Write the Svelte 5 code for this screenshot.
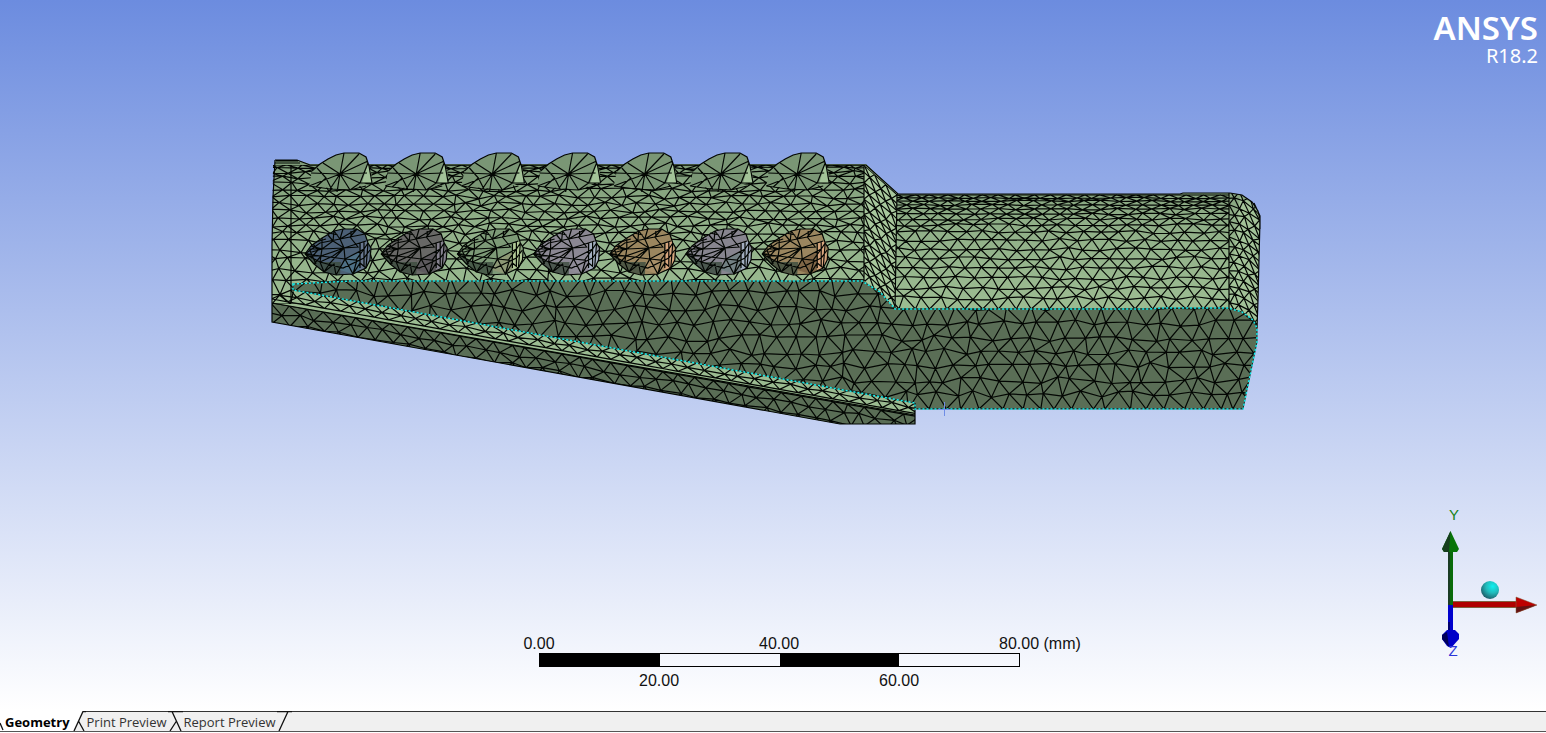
<script>
  const noise = (a, b, seed) => {
    const s = Math.sin(a * 127.1 + b * 311.7 + seed * 74.7) * 43758.5453;
    return s - Math.floor(s) - 0.5;
  };

  // Staggered triangle mesh between x0 and x1 with one row of nodes per entry of ys.
  function mesh({ x0, x1, ys, dx, jx = 0, jy = 0, seed = 1, warp = (x, y) => [x, y] }) {
    const cols = Math.ceil((x1 - x0) / dx) + 2;
    const node = (r, c) => {
      const gap = r + 1 < ys.length ? ys[r + 1] - ys[r] : ys[r] - ys[r - 1];
      const edge = r === 0 || r === ys.length - 1;
      const x = x0 + (c - 1 + (r % 2 ? 0.5 : 0)) * dx + noise(r, c, seed) * jx;
      const y = ys[r] + (edge ? 0 : noise(c, r, seed + 9) * jy * gap);
      return warp(x, y);
    };
    const f = (p) => `${Math.round(p[0] * 10) / 10} ${Math.round(p[1] * 10) / 10}`;
    let d = '';
    for (let r = 0; r < ys.length; r++) {
      for (let c = 0; c <= cols; c++) {
        const p = node(r, c);
        d += `M${f(p)}L${f(node(r, c + 1))}`;
        if (r + 1 === ys.length) continue;
        const a = node(r + 1, r % 2 ? c : c - 1);
        const b = node(r + 1, r % 2 ? c + 1 : c);
        d += `M${f(a)}L${f(p)}L${f(b)}`;
      }
    }
    return d;
  }

  const upperMesh = mesh({
    x0: 272, x1: 866, dx: 17, jx: 8, jy: 0.6, seed: 3,
    ys: [165, 168, 172, 177, 183, 190, 197, 204, 211, 218, 225, 233, 241, 250, 260, 270, 281, 292, 304]
  });
  const handleMesh = mesh({
    x0: 897, x1: 1230, dx: 17, jx: 4, jy: 0.4, seed: 5,
    ys: [195, 198, 201, 205, 209, 214, 219, 225, 232, 240, 249, 258, 268, 278, 288, 298, 309]
  });
  const slopeMesh = mesh({
    x0: 864, x1: 897, dx: 11, jx: 1, jy: 0.3, seed: 2,
    ys: Array.from({ length: 15 }, (_, i) => 165 + i * 8.3),
    warp: (x, y) => [x, y + (x - 864) * 0.9]
  });
  const endMesh = mesh({
    x0: 1229, x1: 1262, dx: 10, jx: 2, jy: 0.4, seed: 8,
    ys: Array.from({ length: 18 }, (_, i) => 190 + i * 8),
    warp: (x, y) => [x, y + Math.pow(Math.max(0, x - 1229) / 31, 2) * 16]
  });
  const frontMesh = mesh({
    x0: 290, x1: 1262, dx: 18, jx: 9, jy: 0.5, seed: 11,
    ys: [278, 293, 308, 323, 338, 352, 366, 380, 394, 409]
  });
  const ribMesh = mesh({
    x0: 272, x1: 918, dx: 17, jx: 5, jy: 0.4, seed: 6,
    ys: [286, 293, 299],
    warp: (x, y) => [x, y + (x - 272) * 0.178]
  });
  const baseMesh = mesh({
    x0: 272, x1: 918, dx: 17, jx: 6, jy: 0.4, seed: 7,
    ys: [303, 312, 322, 332],
    warp: (x, y) => [x, y + (x - 272) * 0.176]
  });

  const pitch = 76.2;
  const pods = [
    { main: '#4c6076', right: '#4f7187', edge: '#68778f' },
    { main: '#686866', right: '#5d5a5e', edge: '#85818e' },
    { main: '#7d9a77', right: '#8d9875', edge: '#b1c897' },
    { main: '#8b8893', right: '#8f8c98', edge: '#a6b1c3' },
    { main: '#9b865f', right: '#a88f68', edge: '#d7a57d' },
    { main: '#87858f', right: '#738184', edge: '#a2aec0' },
    { main: '#9b865f', right: '#806747', edge: '#d7a57d' }
  ];

  const body = 'M275 160H297L310 164H866L898 194H1180L1183 193H1230L1242 195L1252 202L1258 211L1260 219L1258 300L1257 342L1243 409H915V424H840L272 322V245L273 197L275 165Z';
  const front = 'M293 284L350 281H862L880 292L895 309H1150L1160 308H1228L1242 312L1253 320L1257 328V342L1243 409H915V403L293 290Z';
  const podShape = 'M305 254L311 246L322 238L334 231L343 229H357L365 234L368 243L371 248L370 260L366 268L353 274L336 275L324 272L314 264Z';

  const tabs = ['Geometry', 'Print Preview', 'Report Preview'];
  let active = $state('Geometry');
</script>

<div class="app">
  <main class="viewport">
    <svg class="model" viewBox="0 0 1546 711" role="img" aria-label="Meshed part">
      <defs>
        <linearGradient id="skin" x1="0" y1="165" x2="0" y2="300" gradientUnits="userSpaceOnUse">
          <stop offset="0" stop-color="#7f9c79" />
          <stop offset="0.4" stop-color="#8fae87" />
          <stop offset="1" stop-color="#9bbb91" />
        </linearGradient>
        <clipPath id="c-upper"><path d="M273 165H864V281H350L293 284V291L305 304H272V245Z" /></clipPath>
        <clipPath id="c-handle"><path d="M897 194H1229V309H895Z" /></clipPath>
        <clipPath id="c-slope"><path d="M864 165L897 194L895 309L880 292L864 281Z" /></clipPath>
        <clipPath id="c-end"><path d="M1229 193L1242 195L1252 202L1260 217L1257 328L1242 312L1229 308Z" /></clipPath>
        <clipPath id="c-front"><path d={front} /></clipPath>
        <clipPath id="c-rib"><path d="M293 290L915 403V415L272 303V297Z" /></clipPath>
        <clipPath id="c-base"><path d="M272 303L915 415V424H840L272 322Z" /></clipPath>

        <g id="bump">
          <path class="bump-face" d="M309 186L312 171L320 164L328 159L336 155L344 153H359L366 157L369 166L366 183L352 190Z" />
          <path class="bump-side" d="M368 163L371 172L372 183L362 183Z" />
          <path class="wire" d="M312 171L320 164L328 159L336 155L344 153H359L366 157L369 166L372 183L360 183L368 163M340 174L344 153M340 174L359 154M340 174L368 161M340 174L323 163M340 174L311 173M340 174L309 186M340 174L330 189M340 174L337 192M340 174L350 190M340 174L360 183M340 174L367 173M317 168L326 178L316 187M326 178L332 190M350 190L360 183M309 186L330 189L350 190L366 186" />
        </g>
        <g id="pod-wire">
          <path class="wire" d={podShape} />
          <path class="wire" d="M305 254L322 249L344 248L366 241M305 254L320 243L340 239L357 229M305 254L321 256L345 259L364 249L368 243M305 254L320 262L343 268L364 258L370 250M311 246L322 249L320 262L324 272M322 238L322 249L333 241L334 231M334 231L340 239L343 229M344 248L340 239L350 237L365 234M350 237L357 229M350 237L358 247L344 248L333 241M344 248L345 259L336 275M344 248L333 256L320 262M344 248L321 256L314 264M344 248L330 263L324 272M345 259L353 274L360 263L366 268M345 259L356 260L364 249M360 243V268M364 242V267M368 243L366 268M353 274L357 260M313 244L318 250L311 258M316 242L326 239M310 251L316 264M308 256H324M309 249H322M328 235L333 241M336 275L334 264L324 272M351 231V237M329 233L338 235" />
        </g>
      </defs>

      <g>
        <path d={body} fill="url(#skin)" />
        <path class="slope" d="M864 165L897 194L895 309L880 292L864 281Z" />
        <path class="end" d="M1240 197L1252 203L1260 217L1257 328L1242 312L1229 308Z" />
        <path class="shade" d="M272 303L915 415V424H840L272 322Z" />
        <path class="shade" d={front} />

        <path class="wire" d={upperMesh} clip-path="url(#c-upper)" />
        <path class="wire" d={handleMesh} clip-path="url(#c-handle)" />
        <path class="wire" d={slopeMesh} clip-path="url(#c-slope)" />
        <path class="wire" d={endMesh} clip-path="url(#c-end)" />
        <path class="wire" d={frontMesh} clip-path="url(#c-front)" />
        <path class="wire" d={ribMesh} clip-path="url(#c-rib)" />
        <path class="wire" d={baseMesh} clip-path="url(#c-base)" />

        <path class="wire" d="M864 165V281M897 194L895 309M1229 193V308M291 165V303M272 303L915 415M275 160H297L310 165H866L898 194H1180L1183 193H1230L1242 195L1252 202L1258 211L1260 219L1258 300L1257 328M915 403V424H840L272 322V245L273 197L275 160M275 163H300M276 161H298M1254 203L1260 216V229" />

        {#each pods as pod, i}
          <use href="#bump" x={i * pitch} />
          <g transform={`translate(${i * pitch} 0)`}>
            <path d={podShape} fill={pod.main} />
            <path class="pod-low" d="M305 254L320 262H341L340 275L324 272L314 264Z" />
            <path d="M345 259L360 252V270L353 274L340 270Z" fill={pod.right} />
            <path d="M361 243L368 241L370 260L366 268L360 270Z" fill={pod.edge} />
          </g>
          <use href="#pod-wire" x={i * pitch} />
        {/each}

        <path class="edge-back" d={front} />
        <path class="edge" d={front} />
        <path class="probe" d="M938 409.500H951M944.500 402V416" />
      </g>
    </svg>

    <div class="brand">
      <strong>ANSYS</strong>
      <span>R18.2</span>
    </div>

    <div class="scale">
      <div class="labels"><span>0.00</span><span>40.00</span><span class="unit">80.00 (mm)</span></div>
      <div class="bar"><i></i><i></i><i></i><i></i></div>
      <div class="labels lower"><span>20.00</span><span>60.00</span></div>
    </div>

    <svg class="triad" viewBox="0 0 116 165" role="img" aria-label="Axis triad">
      <defs>
        <radialGradient id="ball" cx="0.65" cy="0.3" r="0.8">
          <stop offset="0" stop-color="#0ff0f0" />
          <stop offset="0.45" stop-color="#22bcbc" />
          <stop offset="1" stop-color="#1d4f5c" />
        </radialGradient>
      </defs>
      <text x="24" y="20" fill="#168216">Y</text>
      <path d="M18 46H23V105H18Z" fill="#0a6b0a" />
      <path d="M18 46H20V105H18Z" fill="#1a3c24" />
      <path d="M20.500 31L12 49L14 52H27L29 49Z" fill="#087508" />
      <path d="M20.500 31L12 49L14 52H19Z" fill="#153d1d" />
      <path d="M23 102H87V107H23Z" fill="#b00000" />
      <path d="M23 101.500H87M23 107.500H87" stroke="#80613f" />
      <path d="M86 97L107 105L86 113Z" fill="#bd0000" />
      <path d="M86 107L107 105L86 113Z" fill="#641111" />
      <path d="M86 97L107 105L86 113Z" fill="none" stroke="#80613f" stroke-width="0.5" />
      <circle cx="60" cy="90" r="9" fill="url(#ball)" />
      <path d="M18 105H23V134H18Z" fill="#0000cd" />
      <path d="M18 122H20V134H18Z" fill="#000070" />
      <path d="M12 135L17 130H25L29 134V139L21 148L17 146L12 139Z" fill="#0000c8" />
      <path d="M12 135L17 132L19 147L12 139Z" fill="#00005a" />
      <text x="23" y="156" fill="#2a35d8">Z</text>
    </svg>
  </main>

  <nav class="tabs" aria-label="Views">
    <svg class="lead" viewBox="0 0 4 20"><path d="M0 12L3 19" /></svg>
    {#each tabs as tab, i}
      <button class:active={active === tab} onclick={() => (active = tab)}>{tab}</button>
      <svg class="sep" viewBox="0 0 15 20">
        {#if i === 0}
          <path class="paper" d="M0 0H11L2 20H0Z" />
          <path d="M15 0.500H12L3 20M7.500 10L13 20" />
        {:else if i === 1}
          <path d="M0 0.500H15M4 0.500L13 20M8.500 10L2 20" />
        {:else}
          <path d="M0 0.500H15M11 0.500L2 20" />
        {/if}
      </svg>
    {/each}
    <span class="rest"></span>
  </nav>
</div>

<style>
  :global(body) {
    margin: 0;
    background: #fff;
  }
  .app {
    min-height: 100vh;
    box-sizing: border-box;
    padding-bottom: 1px;
    display: flex;
    flex-direction: column;
  }
  .viewport {
    flex: 1;
    display: grid;
    grid-template: minmax(0, 1fr) / minmax(0, 1fr);
    background: linear-gradient(#6c8cdf, #fff);
    overflow: hidden;
  }
  .viewport > * {
    grid-area: 1 / 1;
  }
  .model {
    width: 100%;
    height: 100%;
  }
  .wire {
    fill: none;
    stroke: #030603;
    stroke-width: 1.2;
  }
  .shade {
    fill: #5a6e56;
  }
  .slope {
    fill: #a8c89d;
  }
  .end {
    fill: #a3c398;
  }
  .bump-face {
    fill: #7a9675;
  }
  .bump-side {
    fill: #a3c398;
  }
  .pod-low {
    fill: #3c4c3e;
    fill-opacity: 0.8;
  }
  .edge-back {
    fill: none;
    stroke: #20332c;
  }
  .edge {
    fill: none;
    stroke: #12ecec;
    stroke-width: 1.5;
    stroke-dasharray: 2 2;
  }
  .probe {
    stroke: #6f8de6;
  }

  .brand {
    justify-self: end;
    align-self: start;
    padding: 4px 8px 0 0;
    display: flex;
    flex-direction: column;
    align-items: flex-end;
    color: #fff;
    font-family: 'Noto Sans', sans-serif;
  }
  .brand strong {
    font-size: 33px;
    font-weight: 600;
    line-height: 48px;
  }
  .brand span {
    font-size: 20px;
    line-height: 8px;
  }

  .scale {
    justify-self: center;
    align-self: end;
    width: 520px;
    margin: 0 0 21px 12px;
    font: 16px/18px 'Liberation Sans', sans-serif;
    color: #111;
  }
  .labels {
    display: flex;
    justify-content: space-between;
  }
  .labels span {
    width: 40px;
    text-align: center;
    white-space: nowrap;
  }
  .labels .unit {
    text-align: left;
  }
  .lower {
    padding: 5px 120px 0;
  }
  .bar {
    display: flex;
    height: 12px;
    margin: 0 19px 0 20px;
    border: 1px solid #000;
  }
  .bar i {
    flex: 1;
  }
  .bar i:nth-child(odd) {
    background: #000;
  }

  .triad {
    justify-self: end;
    align-self: end;
    width: 116px;
    height: 165px;
    margin-bottom: 46px;
  }
  .triad text {
    font: 15px 'Liberation Sans', sans-serif;
    text-anchor: middle;
  }

  .tabs {
    display: flex;
    height: 20px;
    background: #f0f0f0;
    border-bottom: 1px solid #555;
  }
  .tabs button {
    padding: 0 1px;
    border: 0;
    border-top: 1px solid #333;
    background: none;
    color: #333;
    font: 13px/20px 'Open Sans', sans-serif;
  }
  .tabs .active {
    background: #fff;
    border-top-color: #fff;
    color: #000;
    font-weight: 700;
  }
  .tabs svg {
    height: 20px;
    fill: none;
    stroke: #111;
    stroke-width: 1.3;
  }
  .lead {
    width: 4px;
    background: #fff;
  }
  .sep {
    width: 15px;
  }
  .tabs .paper {
    fill: #fff;
    stroke: none;
  }
  .rest {
    flex: 1;
    border-top: 1px solid #333;
  }
</style>
